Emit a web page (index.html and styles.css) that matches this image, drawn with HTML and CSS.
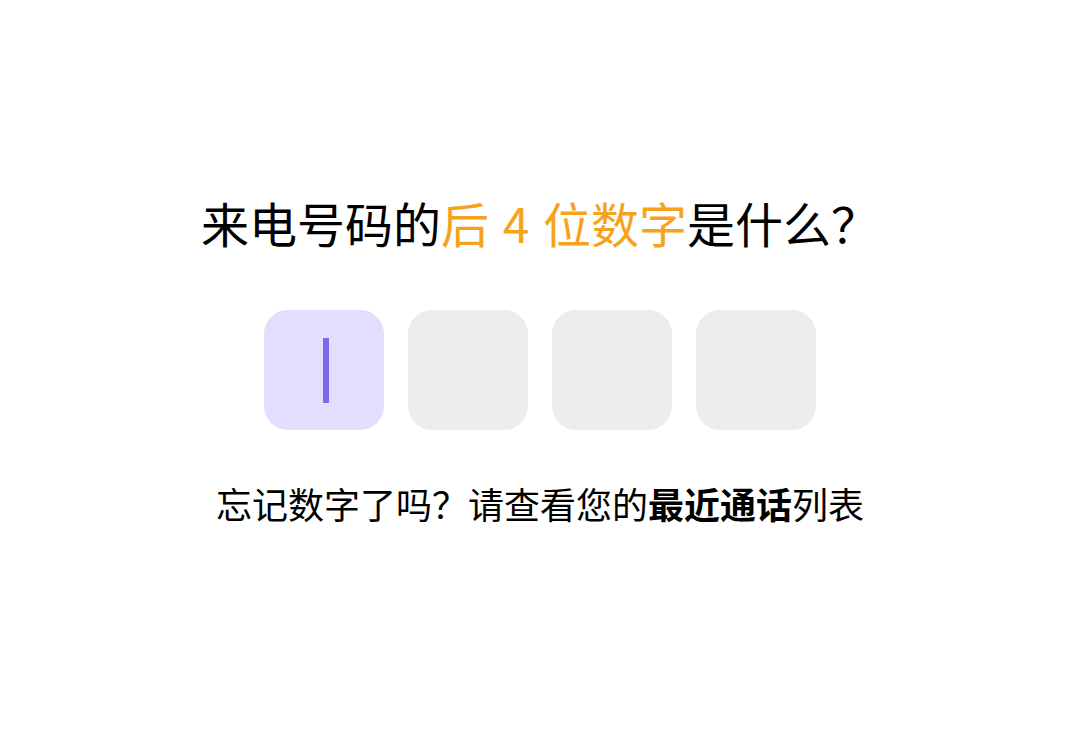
FILE: index.html
```html
<!DOCTYPE html>
<html lang="zh-CN">
<head>
    <meta charset="UTF-8">
    <meta name="viewport" content="width=device-width, initial-scale=1.0">
    <title>验证来电号码</title>
    <link rel="stylesheet" href="styles.css">
</head>
<body>
    <main class="verify">
        <h1 class="question">来电号码的<span class="highlight">后 <span class="digit">4</span> 位数字</span>是什么？</h1>

        <!-- Code boxes -->
        <div class="code-boxes">
            <div class="code-box active"><span class="cursor"></span></div>
            <div class="code-box"></div>
            <div class="code-box"></div>
            <div class="code-box"></div>
        </div>

        <p class="hint">忘记数字了吗？请查看您的<strong>最近通话</strong>列表</p>
    </main>
</body>
</html>
```

FILE: styles.css
```css
body {
    margin: 0;
    background-color: #ffffff;
    font-family: "Noto Sans CJK SC", "Noto Sans", sans-serif;
    color: #000000;
}

.verify {
    display: flex;
    flex-direction: column;
    align-items: center;
    padding-top: 187px;
}

.question {
    margin: 0;
    font-size: 48px;
    font-weight: 400;
    line-height: 70px;
}

.highlight {
    color: #f5a31c;
}

.digit {
    margin: 0 3px;
}

.code-boxes {
    display: flex;
    gap: 24px;
    margin-top: 53px;
}

.code-box {
    width: 120px;
    height: 120px;
    border-radius: 24px;
    background-color: #ededed;
    display: flex;
    align-items: center;
    justify-content: center;
}

.code-box.active {
    background-color: #e3defe;
}

.cursor {
    width: 6px;
    height: 65px;
    margin-left: 4px;
    background-color: #7b68ee;
}

.hint {
    margin: 49px 0 0;
    font-size: 36px;
    line-height: 48px;
}

.hint strong {
    font-weight: 700;
}
```
